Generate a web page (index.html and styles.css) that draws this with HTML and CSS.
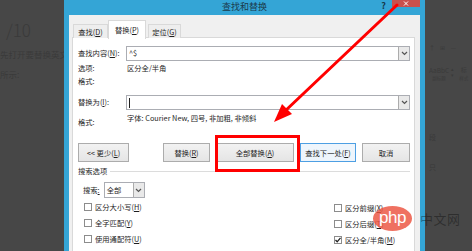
FILE: index.html
```html
<!DOCTYPE html>
<html lang="zh-CN">
<head>
  <meta charset="UTF-8" />
  <meta name="viewport" content="width=device-width, initial-scale=1.0" />
  <title>查找和替换</title>
  <link rel="stylesheet" href="styles.css">
</head>
<body>
  <div class="screen">
    <div class="doc-left">
      <p class="page-num">/10</p>
      <p class="doc-line">先打开要替换英文</p>
      <p class="doc-line short">所示:</p>
    </div>

    <div class="doc-right">
      <div class="rib-icons">↑ ⊞ —</div>
      <div class="rib-styles">
        <div class="style-box"><span class="aa">AaBbC</span><span class="sub">副标题</span></div>
        <div class="style-arrows">▴<br>▾</div>
        <div class="style-box narrow"><span>标</span><span class="sub">样式</span></div>
      </div>
      <p class="doc-mark">段</p>
      <p class="doc-mark">只</p>
    </div>

    <div class="dialog">
      <div class="titlebar">
        <span class="title">查找和替换</span>
        <span class="help">?</span>
        <span class="close"><svg width="6" height="5" viewBox="0 0 6 5"><path d="M1 0.5 L5 4.5 M5 0.5 L1 4.5" stroke="#fff" stroke-width="1"/></svg></span>
      </div>

      <div class="dlg-body">
        <div class="tabs">
          <span class="tab"><span>查找(<u>D</u>)</span></span>
          <span class="tab active"><span>替换(<u>P</u>)</span></span>
          <span class="tab last"><span>定位(<u>G</u>)</span></span>
        </div>

        <div class="panel">
          <div class="form">
            <span class="lbl">查找内容(<u>N</u>):</span>
            <div class="combo"><span class="val">^$</span><i class="drop"><svg width="7" height="5" viewBox="0 0 7 5"><polyline points="1,1 3.5,3.5 6,1" fill="none" stroke="#555" stroke-width="1.2"/></svg></i></div>

            <span class="lbl">选项:</span>
            <span class="val">区分全/半角</span>

            <span class="lbl">格式:</span>
            <span></span>

            <span class="lbl end">替换为(<u>I</u>):</span>
            <div class="combo end"><span class="caret"></span><i class="drop"><svg width="7" height="5" viewBox="0 0 7 5"><polyline points="1,1 3.5,3.5 6,1" fill="none" stroke="#555" stroke-width="1.2"/></svg></i></div>

            <span class="lbl end fmt-lbl">格式:</span>
            <span class="val fmt">字体: Courier New, 四号, 非加粗, 非倾斜</span>
          </div>

          <div class="buttons">
            <button class="btn less">&lt;&lt; 更少(<u>L</u>)</button>
            <button class="btn replace">替换(<u>R</u>)</button>
            <button class="btn all">全部替换(<u>A</u>)</button>
            <button class="btn next">查找下一处(<u>F</u>)</button>
            <button class="btn cancel">取消</button>
          </div>

          <div class="group-title">搜索选项</div>

          <div class="search-row">
            <span>搜索<u>:</u></span>
            <div class="select"><span>全部</span><i class="drop"><svg width="7" height="5" viewBox="0 0 7 5"><polyline points="1,1 3.5,3.5 6,1" fill="none" stroke="#555" stroke-width="1.2"/></svg></i></div>
          </div>

          <div class="checks">
            <div class="col">
              <label class="check"><i class="cb"></i><span>区分大小写(<u>H</u>)</span></label>
              <label class="check"><i class="cb"></i><span>全字匹配(<u>Y</u>)</span></label>
              <label class="check"><i class="cb"></i><span>使用通配符(<u>U</u>)</span></label>
              <label class="check"><i class="cb"></i><span>同音(英文)(<u>K</u>)</span></label>
            </div>
            <div class="col right">
              <label class="check"><i class="cb"></i><span>区分前缀(<u>X</u>)</span></label>
              <label class="check"><i class="cb"></i><span>区分后缀(<u>T</u>)</span></label>
              <label class="check"><i class="cb"><svg width="8" height="8" viewBox="0 0 8 8"><polyline points="1.5,4 3.2,5.8 6.5,1.8" fill="none" stroke="#222" stroke-width="1.3"/></svg></i><span>区分全/半角(<u>M</u>)</span></label>
              <label class="check"><i class="cb"></i><span>忽略标点符号(<u>S</u>)</span></label>
            </div>
          </div>
        </div>
      </div>
    </div>

    <svg class="annot" width="472" height="251" viewBox="0 0 472 251">
      <line x1="397" y1="5" x2="284" y2="112" stroke="#ff0000" stroke-width="3" stroke-linecap="round"/>
      <polygon points="274,122 282,104 292,114" fill="#ff0000"/>
      <rect x="216.5" y="136.5" width="82" height="34" fill="none" stroke="#ff0000" stroke-width="3"/>
    </svg>

    <div class="watermark">
      <span class="php">php</span>
      <span class="cn">中文网</span>
    </div>
  </div>
</body>
</html>
```

FILE: styles.css
```css
* { box-sizing: border-box; }

body {
  margin: 0;
  background: #474747;
  font-family: "Noto Sans CJK SC", "Noto Sans", sans-serif;
}

.screen {
  position: relative;
  width: 472px;
  height: 251px;
  overflow: hidden;
  background: #474747;
  display: flex;
  justify-content: space-between;
}

/* document behind the dialog */
.doc-left {
  width: 64px;
  color: #3a3a3a;
  white-space: nowrap;
}
.page-num {
  margin: 20px 0 0 6px;
  font-size: 17px;
  line-height: 20px;
  font-weight: 300;
}
.doc-line {
  margin: 9px 0 0 0;
  font-size: 8.5px;
  line-height: 11px;
}
.doc-line.short { margin-top: 9px; }

.doc-right {
  width: 47px;
  padding: 44px 0 0 4px;
  color: #3a3a3a;
  font-size: 6px;
}
.rib-icons { letter-spacing: 2px; line-height: 8px; }
.rib-styles {
  display: flex;
  gap: 2px;
  margin-top: 14px;
}
.style-box {
  display: flex;
  flex-direction: column;
  align-items: center;
  line-height: 8px;
}
.style-box .aa { font-size: 6.5px; }
.style-box .sub { font-size: 4.5px; }
.style-arrows { font-size: 5px; line-height: 6px; }
.style-box.narrow { margin-left: 3px; }
.doc-mark {
  margin: 50px 0 0 0;
  font-size: 7px;
}
.doc-mark + .doc-mark { margin-top: 20px; }

/* dialog window */
.dialog {
  position: absolute;
  left: 64px;
  top: 0;
  width: 361px;
  height: 262px;
  background: #34a5d6;
  padding: 0 5px;
  font-size: 7.3px;
  color: #1e1e1e;
}

.titlebar {
  position: relative;
  height: 15px;
  display: flex;
  justify-content: center;
  align-items: center;
}
.title {
  font-size: 9px;
  color: #1b3a4c;
  line-height: 12px;
  margin-top: -2px;
}
.help {
  position: absolute;
  right: 34px;
  top: -1px;
  font-size: 9px;
  font-weight: bold;
  color: #16394c;
}
.close {
  position: absolute;
  right: 0;
  top: 0;
  width: 28px;
  height: 7px;
  background: #c9504d;
  display: flex;
  align-items: center;
  justify-content: center;
}

.dlg-body {
  height: 247px;
  background: #f0f0f0;
  padding: 5px 5px 0 3px;
}

.tabs {
  display: flex;
  align-items: flex-end;
  height: 18px;
  padding-left: 1px;
}
.tab {
  height: 14px;
  width: 35px;
  border: 1px solid #d9d9d9;
  border-bottom: none;
  background: #eeeeee;
  display: flex;
  align-items: center;
  justify-content: center;
  line-height: 10px;
  white-space: nowrap;
}
.tab.active {
  position: relative;
  z-index: 1;
  width: 38px;
  height: 19px;
  margin-bottom: -1px;
  background: #fff;
}
.tab.last { width: 33px; margin-left: 2px; }

.panel {
  height: 240px;
  background: #fff;
  border: 1px solid #d9d9d9;
  margin-top: -1px;
  padding: 8px 4px 0 5px;
}

.form {
  display: grid;
  grid-template-columns: 48px 284px;
  grid-template-rows: 15px 14px 13px 22px 20px;
  align-items: center;
}
.lbl { line-height: 11px; white-space: nowrap; }
.val { padding-left: 1px; line-height: 11px; white-space: nowrap; }
.form .end { align-self: end; }
.form .lbl.end { line-height: 15px; }
.form .fmt-lbl { line-height: 13px; }
.fmt { align-self: start; margin-top: 3px; }

.combo {
  height: 15px;
  border: 1px solid #abadb3;
  display: flex;
  align-items: center;
  justify-content: space-between;
  padding-left: 2px;
}
.combo .val { padding-left: 0; }
.caret {
  width: 1px;
  height: 10px;
  background: #222;
}
.drop {
  width: 11px;
  height: 100%;
  border-left: 1px solid #acacac;
  background: #e9e9e9;
  display: flex;
  align-items: center;
  justify-content: center;
}

.buttons {
  display: flex;
  gap: 6px;
  margin-top: 13px;
}
.btn {
  height: 19px;
  padding: 0;
  border: 1px solid #acacac;
  background: linear-gradient(#f2f2f2, #e5e5e5);
  font: inherit;
  color: #1e1e1e;
  line-height: 10px;
  white-space: nowrap;
}
.btn.less { width: 51px; margin-right: auto; }
.btn.replace { width: 47px; }
.btn.all { width: 78px; }
.btn.next { width: 56px; border-color: #4d9fe3; background: #eef5fc; }
.btn.cancel { width: 48px; }

.group-title {
  display: flex;
  align-items: center;
  gap: 3px;
  margin-top: 3px;
  line-height: 12px;
}
.group-title::after {
  content: "";
  flex: 1;
  height: 1px;
  background: #dcdcdc;
}

.search-row {
  display: flex;
  align-items: center;
  gap: 4px;
  margin: 5px 0 0 5px;
}
.select {
  width: 41px;
  height: 16px;
  border: 1px solid #abadb3;
  display: flex;
  align-items: center;
  justify-content: space-between;
  padding-left: 2px;
}

.checks {
  display: flex;
  justify-content: space-between;
  margin: 1px 0 0 6px;
}
.col { display: flex; flex-direction: column; }
.col.right { width: 76px; margin-top: 1px; }
.check {
  height: 16px;
  display: flex;
  align-items: center;
  gap: 3px;
  white-space: nowrap;
}
.cb {
  width: 8px;
  height: 8px;
  border: 1px solid #8c8c8c;
  background: #fff;
  display: flex;
  align-items: center;
  justify-content: center;
}
.cb svg { flex: none; }

/* red annotations over the screenshot */
.annot {
  position: absolute;
  left: 0;
  top: 0;
  pointer-events: none;
}

.watermark {
  position: absolute;
  left: 373px;
  top: 206px;
  display: flex;
  align-items: center;
  gap: 8px;
}
.php {
  width: 39px;
  height: 25px;
  border-radius: 50%;
  background: rgba(236, 82, 62, 0.82);
  color: #fff;
  font-family: "Liberation Sans", sans-serif;
  font-size: 17px;
  line-height: 23px;
  text-align: center;
  letter-spacing: -0.5px;
}
.cn {
  font-size: 13px;
  color: rgba(0, 0, 0, 0.35);
  line-height: 16px;
  letter-spacing: 0.5px;
}
```
